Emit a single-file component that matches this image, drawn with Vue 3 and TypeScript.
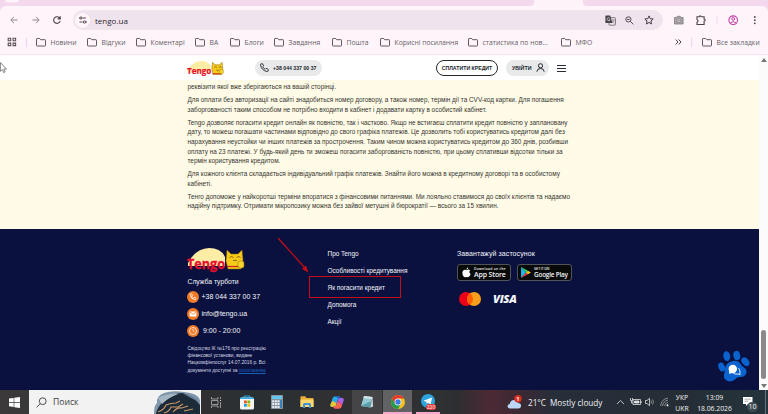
<script setup lang="ts">
interface Bookmark {
    title: string;
    width: number;
}

const bookmarks: Bookmark[] = [
    { title: 'Новини', width: 51 },
    { title: 'Відгуки', width: 49 },
    { title: 'Коментарі', width: 59 },
    { title: 'ВА', width: 35 },
    { title: 'Блоги', width: 44 },
    { title: 'Завдання', width: 58 },
    { title: 'Пошта', width: 48 },
    { title: 'Корисні посилання', width: 88 },
    { title: 'статистика по нов...', width: 93 },
    { title: 'МФО', width: 60 },
];

const paragraphs: string[][] = [
    ['реквізити якої вже зберігаються на вашій сторінці.'],
    [
        'Для оплати без авторизації на сайті знадобиться номер договору, а також номер, термін дії та CVV-код картки. Для погашення',
        'заборгованості таким способом не потрібно входити в кабінет і додавати картку в особистий кабінет.',
    ],
    [
        'Tengo дозволяє погасити кредит онлайн як повністю, так і частково. Якщо не встигаєш сплатити кредит повністю у заплановану',
        'дату, то можеш погашати частинами відповідно до свого графіка платежів. Це дозволить тобі користуватись кредитом далі без',
        'нарахування неустойки чи інших платежів за прострочення. Таким чином можна користуватись кредитом до 360 днів, розбивши',
        'оплату на 23 платежі. У будь-який день ти зможеш погасити заборгованість повністю, при цьому сплативши відсотки тільки за',
        'термін користування кредитом.',
    ],
    [
        'Для кожного клієнта складається індивідуальний графік платежів. Знайти його можна в кредитному договорі та в особистому',
        'кабінеті.',
    ],
    [
        'Тенго допоможе у найкоротші терміни впоратися з фінансовими питаннями. Ми лояльно ставимося до своїх клієнтів та надаємо',
        'надійну підтримку. Отримати мікропозику можна без зайвої метушні й бюрократії — всього за 15 хвилин.',
    ],
];

const footerLinks: string[] = ['Про Tengo', 'Особливості кредитування', 'Як погасити кредит', 'Допомога', 'Акції'];
</script>

<template>
    <div class="screen">
        <svg class="tabs" viewBox="0 0 768 6" width="768" height="6">
            <rect x="5" y="-4" width="14" height="6.5" rx="3" fill="#fdf3f9" />
            <path d="M530 6q4 0 4-4V0h49v2q0 4 4 4z" fill="#fdf3f9" />
        </svg>

        <div class="toolbar">
            <div class="nav">
                <svg width="8" height="8" viewBox="0 0 8 8" fill="none" stroke="#91848f"><path d="M7.5 4H1M4 .8L.8 4 4 7.2" /></svg>
                <svg width="8" height="8" viewBox="0 0 8 8" fill="none" stroke="#91848f"><path d="M.5 4H7M4 .8L7.2 4 4 7.2" /></svg>
                <svg width="8" height="8" viewBox="0 0 8 8" fill="none" stroke="#4a4048" stroke-width="1.1"><path d="M6.8 2.3A3.3 3.3 0 1 0 7.2 4.8M7.2.3v2.6H4.6" /></svg>
            </div>
            <div class="address">
                <span class="site-info">
                    <svg width="8" height="8" viewBox="0 0 8 8" fill="none" stroke="#453c43" stroke-width=".9"><path d="M0 2h1M3.5 2H7M.5 6h3M6.8 6H8" /><circle cx="2" cy="2" r="1.1" /><circle cx="5.5" cy="6" r="1.2" /></svg>
                </span>
                <span class="url">tengo.ua</span>
                <svg class="translate" width="11" height="11" viewBox="0 0 11 11">
                    <rect x="4" y="2.6" width="6.5" height="7.6" rx=".8" fill="#e9dfe8" stroke="#6b626a" stroke-width=".8" />
                    <path d="M1 .5h4.2L7.4 8H1Q.4 8 .4 7.4V1.1Q.4.5 1 .5z" fill="#4b444a" />
                    <path d="M6.3 5h3.5M8 4.3V5M9.2 5Q8.6 7.2 6.8 7.8M7 6l2.2 2" fill="none" stroke="#7b727a" stroke-width=".6" />
                    <path d="M4.8 3.3A1.5 1.5 0 1 0 5 4.7H3.8" fill="none" stroke="#fff" stroke-width=".6" />
                </svg>
                <svg class="lens" width="9" height="9" viewBox="0 0 9 9" fill="none" stroke="#554b53"><circle cx="3.4" cy="3.4" r="2.6" /><path d="M5.4 5.4l3 3M2.1 3.4h2.6" /></svg>
                <svg class="star" width="10" height="10" viewBox="0 0 10 10" fill="none" stroke="#4a4048" stroke-width="1"><path d="M5 .9l1.2 2.8 3 .3-2.3 2 .7 3L5 7.4 2.4 9l.7-3L.8 4l3-.3z" /></svg>
            </div>
            <svg class="tools" width="102" height="12" viewBox="0 0 102 12" fill="none">
                <path d="M11.5 3.5h2l.8-1.2h3l.8 1.2h2V10h-8.600z" fill="#aaa2a8" stroke="#827b80" stroke-width=".8" />
                <circle cx="15.8" cy="6.6" r="1.9" fill="#eee" stroke="#827b80" stroke-width=".8" />
                <path d="M15.8 5.5v2.2M14.7 6.6h2.2" stroke="#827b80" stroke-width=".6" />
                <path d="M34 2.8h2.3q.9-2 1.8 0h3v2.5q2.5.9 0 1.9v3.3H34V8.2q2-1.3 0-2.6z" stroke="#4a4048" stroke-width="1.1" />
                <path d="M54 2v8" stroke="#f8d0ef" />
                <circle cx="70.2" cy="6.2" r="4.3" stroke="#c43fa4" stroke-width="1.1" />
                <circle cx="70.2" cy="4.9" r="1.4" stroke="#c43fa4" />
                <path d="M67.1 9q3-2.8 6.2 0" stroke="#c43fa4" />
                <g fill="#4a4048"><circle cx="91.8" cy="3" r=".9" /><circle cx="91.8" cy="6.2" r=".9" /><circle cx="91.8" cy="9.3" r=".9" /></g>
            </svg>
        </div>

        <div class="bookmarks">
            <div class="apps">
                <svg width="10" height="10" viewBox="0 0 10 10" fill="none" stroke="#5b5159" stroke-width="1.1"><path d="M1.2 1.2h2.5v2.5H1.2zM6.1 1.2h2.5v2.5H6.1zM1.2 6.1h2.5v2.5H1.2zM6.1 6.1h2.5v2.5H6.1z" /></svg>
                <i class="divider"></i>
            </div>
            <div v-for="item in bookmarks" :key="item.title" class="bookmark" :style="{ width: item.width + 'px' }">
                <svg width="10" height="9" viewBox="0 0 10 9" fill="none" stroke="#625860"><path d="M.5 1.1Q.5.5 1.1.5h2.6l1 1.2h4.2q.6 0 .6.6v5.1q0 .6-.6.6H1.1Q.5 8 .5 7.4z" /></svg>
                <span>{{ item.title }}</span>
            </div>
            <div class="more">
                <svg width="7" height="6" viewBox="0 0 7 6" fill="none" stroke="#4a4048"><path d="M.7.5L3 3 .7 5.5M3.7.5L6 3 3.7 5.5" /></svg>
            </div>
            <i class="divider"></i>
            <div class="bookmark all">
                <svg width="10" height="9" viewBox="0 0 10 9" fill="none" stroke="#625860"><path d="M.5 1.1Q.5.5 1.1.5h2.6l1 1.2h4.2q.6 0 .6.6v5.1q0 .6-.6.6H1.1Q.5 8 .5 7.4z" /></svg>
                <span>Все закладки</span>
            </div>
        </div>

        <div class="viewport">
            <div class="page">
                <header class="header">
                    <svg class="logo" width="37" height="16" viewBox="0 0 58 25">
                        <path d="M1 15Q8 1 22 0q12 0 16 9v9H1z" fill="#ffeda6" />
                        <path d="M40 2l4 4h7l4-4 1 10-2 9H41l-2-8z" fill="#f6ca19" stroke="#8a6510" stroke-width=".8" />
                        <path d="M43 10l2-1 2 1M50 10l2-1 2 1M46 14q2 2 4 0" fill="none" stroke="#5b3b10" />
                        <path d="M40 20h14" stroke="#c72520" stroke-width="1.5" />
                        <rect x="51" y="13" width="6" height="7" rx="2" fill="#f9d52b" stroke="#8a6510" stroke-width=".6" />
                        <text x="0" y="20.5" class="logo-text" textLength="38" lengthAdjust="spacingAndGlyphs">Tengo</text>
                    </svg>
                    <div class="phone-pill">
                        <svg width="9" height="9" viewBox="0 0 9 9" fill="none" stroke="#252a30" stroke-width=".9"><path d="M1 .8h1.7l.9 2.1-1 .9q.8 1.6 2.5 2.5l1-1 2.1 1v1.6q-.2.7-1.1.6Q1.5 7.6.5 1.8.5 1 1 .8z" /></svg>
                        <span>+38 044 337 00 37</span>
                    </div>
                    <div class="pay">СПЛАТИТИ КРЕДИТ</div>
                    <div class="login">
                        <span>УВІЙТИ</span>
                        <svg width="9" height="9" viewBox="0 0 9 9" fill="none" stroke="#252a30"><circle cx="4.5" cy="2.8" r="2.1" /><path d="M.8 8.7q.3-3.2 3.7-3.2t3.7 3.2" /></svg>
                    </div>
                    <div class="burger"><i></i><i></i><i></i></div>
                </header>

                <main class="article">
                    <p v-for="(lines, i) in paragraphs" :key="i">
                        <span v-for="line in lines" :key="line">{{ line }}</span>
                    </p>
                </main>

                <footer class="footer">
                    <div class="contacts">
                        <svg width="58" height="25" viewBox="0 0 58 25">
                            <path d="M1 15Q8 1 22 0q12 0 16 9v9H1z" fill="#ffeda6" />
                            <path d="M40 2l4 4h7l4-4 1 10-2 9H41l-2-8z" fill="#f6ca19" stroke="#8a6510" stroke-width=".5" />
                            <path d="M42.5 9.5l2-1 2 1M49.5 9.5l2-1 2 1M46 12q1 1.5 2 0 1 1.5 2 0" fill="none" stroke="#5b3b10" stroke-width=".7" />
                            <path d="M40 18.5h14" stroke="#c72520" stroke-width="1.2" />
                            <rect x="51" y="13" width="6" height="7" rx="2" fill="#f9d52b" stroke="#8a6510" stroke-width=".5" />
                            <text x="0" y="20.5" class="logo-text" textLength="38" lengthAdjust="spacingAndGlyphs">Tengo</text>
                        </svg>
                        <div class="support">Служба турботи</div>
                        <div class="contact">
                            <svg width="12" height="12" viewBox="0 0 12 12" fill="none" stroke="#fff" stroke-width=".8"><circle cx="6" cy="6" r="6" fill="#f07a25" stroke="none" /><path d="M3.5 2.8h1.3l.6 1.6-.7.7q.6 1.3 1.9 1.9l.7-.7 1.6.7v1.2q-.2.6-.8.5-4.5-.6-5-5.2 0-.5.4-.7z" /></svg>
                            <span>+38 044 337 00 37</span>
                        </div>
                        <div class="contact">
                            <svg width="12" height="12" viewBox="0 0 12 12"><circle cx="6" cy="6" r="6" fill="#f07a25" /><rect x="2.6" y="3.4" width="6.8" height="5.2" rx=".7" fill="#fff" /><path d="M3 4l3 2.4L9 4" fill="none" stroke="#f07a25" stroke-width=".8" /></svg>
                            <span>info@tengo.ua</span>
                        </div>
                        <div class="contact hours">
                            <svg width="12" height="12" viewBox="0 0 12 12" fill="none" stroke="#fff" stroke-width=".7"><circle cx="6" cy="6" r="6" fill="#f07a25" stroke="none" /><circle cx="6" cy="6" r="3.5" /><path d="M6 3.8V6l1.4.8" /></svg>
                            <span>9:00 - 20:00</span>
                        </div>
                        <div class="legal">
                            <div>Свідоцтво ІК №176 про реєстрацію</div>
                            <div>фінансової установи, видане</div>
                            <div>Нацкомфінпослуг 14.07.2016 р. Всі</div>
                            <div>документи доступні за <a>посиланням</a></div>
                        </div>
                    </div>
                    <nav class="links">
                        <a v-for="link in footerLinks" :key="link">{{ link }}</a>
                    </nav>
                    <div class="download">
                        <div class="download-title">Завантажуй застосунок</div>
                        <div class="stores">
                            <div class="store">
                                <svg width="9" height="11" viewBox="0 0 9 11" fill="#fff"><path d="M4.6 3Q6.8 1.9 8.2 3.6 6.3 5.3 8.6 7 7.7 10.3 6 10.3q-1.4-.7-2.7 0Q1 10.3.4 6.5.2 3.3 2.6 2.8q1 0 2 .2zM4.5 2.4Q4.6.8 6.2.3 6.3 2 4.5 2.4z" /></svg>
                                <div><small>Download on the</small><b>App Store</b></div>
                            </div>
                            <div class="store google">
                                <svg width="10" height="11" viewBox="0 0 9 10"><path d="M0 0v10l4.5-5z" fill="#1fb6ee" /><path d="M0 0l6.3 3.5L4.5 5z" fill="#35d16f" /><path d="M0 10l6.3-3.5L4.5 5z" fill="#f13c4b" /><path d="M6.3 3.5L9 5 6.3 6.5 4.5 5z" fill="#fbc61b" /></svg>
                                <div><small>GET IT ON</small><b>Google Play</b></div>
                            </div>
                        </div>
                        <div class="cards">
                            <svg width="22" height="14" viewBox="0 0 22 14"><circle cx="7" cy="7" r="7" fill="#eb0019" /><circle cx="15" cy="7" r="7" fill="#f79e1b" /><path d="M11 1.3a7 7 0 0 1 0 11.4 7 7 0 0 1 0-11.4z" fill="#ff5f00" /></svg>
                            <span class="visa">VISA</span>
                        </div>
                    </div>
                </footer>
            </div>
            <div class="scrollbar">
                <i class="arrow up"></i>
                <i class="thumb"></i>
                <i class="arrow down"></i>
            </div>
        </div>

        <div class="taskbar">
            <div class="start">
                <svg width="11" height="11" viewBox="0 0 11 11" fill="#fff"><path d="M0 1.5l4.7-.6V5H0zM5.3.8L11 0v5H5.3zM0 5.7h4.7v4.2L0 9.3zM5.3 5.7H11V11l-5.7-.8z" /></svg>
            </div>
            <div class="search">
                <svg width="11" height="11" viewBox="0 0 11 11" fill="none" stroke="#3c3c3c" stroke-width=".9"><circle cx="6.7" cy="4.2" r="3.4" /><path d="M4.3 6.6L.6 10.4" /></svg>
                <span>Поиск</span>
                <svg class="doodle" width="47" height="24" viewBox="0 0 47 24">
                    <path d="M0 24Q0 15 3 13 2 6 10 3q8-3 20-1 14 1 16 8v14z" fill="#8096aa" />
                    <path d="M10 11Q20 3 28 3q10 2 18 12v9H2q1-7 8-13z" fill="#1d2a37" />
                    <path d="M4 8q10-5 20-4Q14 8 8 14" fill="#a5b6c5" />
                    <path d="M30 4q9 0 15 8l-8-4z" fill="#66839b" />
                    <path d="M4 22q6-2 8-7 5-2 10-2l4-2M10 23q5-1 7-6h7l5-3M19 22q4-5 9-4l6-2M30 21l9-2" fill="none" stroke="#c79766" stroke-width="1.1" />
                </svg>
            </div>
            <div class="app taskview">
                <svg width="11" height="11" viewBox="0 0 11 11" fill="none" stroke="#b0b0b0" stroke-width=".8"><path d="M.5 0v2H7V0M.5 3.5H7v4H.5zM.5 11V9H7v2M9.5 0v2M9.5 5v6" /><path d="M9 3.5h1" stroke="#fff" /></svg>
            </div>
            <div class="app">
                <svg width="14" height="15" viewBox="0 0 14 15"><path d="M4 3V1h6v2" fill="none" stroke="#29a5e0" /><rect y="2.5" width="14" height="12" rx="1.5" fill="#f2f4f5" /><path d="M0 4V3.5Q0 2.5 1 2.5h12q1 0 1 1V4z" fill="#36afe6" /><path d="M4 5.5h2.8v2.8H4z" fill="#f25022" /><path d="M7.4 5.5h2.8v2.8H7.4z" fill="#7fba00" /><path d="M4 8.9h2.8v2.8H4z" fill="#00a4ef" /><path d="M7.4 8.9h2.8v2.8H7.4z" fill="#ffb900" /></svg>
            </div>
            <div class="app">
                <svg width="12" height="14" viewBox="0 0 12 14"><rect width="12" height="14" rx=".7" fill="#88959e" /><rect x="1" y="1" width="10" height="3" fill="#62c6ef" /><path d="M1.2 5.2h2v2h-2zm2.700 0h2v2h-2zm2.600 0h2v2h-2zM1.2 8.1h2v2h-2zm2.700 0h2v2h-2zm2.600 0h2v2h-2zM1.2 11h2v2h-2zm2.700 0h2v2h-2zm2.600 0h2v2h-2z" fill="#e8edef" /><path d="M9.2 5.2H11V13H9.2z" fill="#2d7dc0" /></svg>
            </div>
            <div class="app">
                <svg width="14" height="12" viewBox="0 0 14 12"><path d="M.5 1Q.5.3 1.2.3h4L6.5 2h6.3q.7 0 .7.7V11H.5z" fill="#e8ac31" /><path d="M.5 3.5h13V11H.5z" fill="#ffd66f" /><path d="M3 12V8.5q0-1.500 1.500-1.500h5Q11 7 11 8.500V12H9V9H5v3z" fill="#3a94db" /></svg>
            </div>
            <div class="app">
                <svg width="14" height="13" viewBox="0 0 14 13">
                    <path d="M4.5.5H9q1.3 0 1.7 2L8 3 6 9.5Q5.5 11 4 11H2Q0 11 .5 8.5L2.5 2.5Q3 .5 4.5.5z" fill="#25a9e6" />
                    <path d="M.5 8L2.5 5l4 2-1 3Q5 11 4 11H2Q0 11 .5 8z" fill="#e9c632" />
                    <path d="M9.5 12.5H5q-1.3 0-1.7-2L6 10 8 3.5Q8.5 2 10 2h2q2 0 1.5 2.5l-2 6q-.5 2-2 2z" fill="#d849a8" />
                    <path d="M3.3 10.5L6 10l1.3-4L12 9l-.5 1.5q-.5 2-2 2H5q-1.3 0-1.7-2z" fill="#f2684e" />
                    <path d="M6 .5h3q1.3 0 1.7 2L8.5 3z" fill="#2657d6" />
                    <path d="M8 3.5Q8.5 2 10 2h2q2 0 1.5 2.5L12.5 8z" fill="#9c67e8" />
                </svg>
            </div>
            <div class="app notes">
                <svg width="14" height="14" viewBox="0 0 14 14"><path d="M4 1l8.5 1-2 10.500L1 11z" fill="#93c9d3" /><path d="M4 1l8.500 1-.5 2L3.500 3z" fill="#dbe6e8" /><path d="M1 11L9 7l2.500-.5-1 6z" fill="#5a9eaa" /><path d="M12.500 2l.6 9.500-2.600 1z" fill="#d6d9da" /></svg>
            </div>
            <div class="app chrome">
                <svg width="14" height="14" viewBox="0 0 14 14"><circle cx="7" cy="7" r="7" fill="#fbc116" /><path d="M.94 3.5A7 7 0 0 1 13.06 3.5H7L4 8.7z" fill="#e33b2e" /><path d="M.94 3.5A7 7 0 0 0 7 14l3-5.2-6-.1z" fill="#229b4d" /><circle cx="7" cy="7" r="3.4" fill="#fff" /><circle cx="7" cy="7" r="2.7" fill="#3a7be8" /></svg>
            </div>
            <div class="app telegram">
                <svg width="14" height="14" viewBox="0 0 14 14"><circle cx="7" cy="7" r="7" fill="#2ba3dc" /><path d="M2.5 6.8L11 3.5 9.7 10.5 7 8.7 5.8 10 5.5 8z" fill="#fff" /><path d="M5.5 8L9.5 5 6.2 8.4 5.8 10z" fill="#b4d9eb" /></svg>
                <span class="badge">220</span>
            </div>
            <div class="weather">
                <svg width="16" height="15" viewBox="0 0 16 15"><path d="M3 13.5q-2.5-.2-2.5-2.3 0-2 2.2-2.3Q3.5 5 7 5q3 0 4 3 3 0 3 2.7t-2.7 2.8z" fill="#bcd7fa" /><circle cx="11" cy="3.7" r="3.7" fill="#d7301f" /><text x="11" y="5.7" text-anchor="middle" class="alert">1</text></svg>
                <span class="temp">21°C</span>
                <span>Mostly cloudy</span>
            </div>
            <svg class="tray" width="54" height="12" viewBox="0 0 54 12" fill="none" stroke="#e0e0e0" stroke-width=".8">
                <path d="M0 8l3.5-3.5L7 8" />
                <path d="M16 3.5h7.5v5H16zM24.2 5v2" /><path d="M17.5 5H22v2h-4.5z" fill="#e0e0e0" /><path d="M13.5 2v2.500h2V2M14.500 4.500V7H16" />
                <path d="M28.5 4.500H30l2.500-2.200v7.400L30 7.500h-1.500z" /><path d="M34 4.500q1 1.500 0 3M35.500 3.300q2 2.700 0 5.400" stroke="#9a9a9a" />
                <path d="M43.500 10q1-7 7.500-8M45.500 10q.7-5 5.500-6M47.500 10q.5-3 3.500-3.700" stroke="#a5a5a5" /><circle cx="50.5" cy="9.3" r=".7" fill="#fff" />
            </svg>
            <div class="lang"><span>УКР</span><span>UKR</span></div>
            <div class="clock"><span>13:09</span><span>18.06.2026</span></div>
            <div class="notify">
                <svg width="10" height="10" viewBox="0 0 10 10" fill="#fff"><path d="M0 0h9.5v7H5L3 9V7H0z" /><path d="M1.5 2.2H8M1.5 4.2h4" stroke="#777" stroke-width=".6" /></svg>
                <span>10</span>
            </div>
            <i class="desktop-edge"></i>
        </div>

        <div class="mark-box"></div>
        <svg class="mark-arrow" width="34" height="38" viewBox="0 0 34 38"><path d="M2 2l27 30" stroke="#c40d16" stroke-width="1.2" /><path d="M32.5 36.5L26 33l3.8-3.5z" fill="#c40d16" /></svg>
        <svg class="paw" width="32" height="32" viewBox="0 0 32 32">
            <g fill="#0b63d0">
                <ellipse cx="3.7" cy="17" rx="3.2" ry="4.6" transform="rotate(-22 3.7 17)" />
                <ellipse cx="8.7" cy="6.2" rx="3.4" ry="4.9" transform="rotate(-10 8.7 6.2)" />
                <ellipse cx="18.8" cy="5.5" rx="3.4" ry="4.7" transform="rotate(-12 18.8 5.5)" />
                <ellipse cx="27.4" cy="11.7" rx="3.3" ry="4.8" transform="rotate(-40 27.4 11.7)" />
                <path d="M15 11q5-1 7.5 3 1.5 2.5 3.5 3.5 3.5 2 2.2 6-1.7 4-6.7 3.5-2.5 0-4 2-3 3-7 2.300-5.500-1.600-4.500-7 1-2.500 1-5.300.5-6.500 8-8z" />
            </g>
            <circle cx="14.8" cy="19" r="4.2" fill="#fff" />
            <path d="M11.5 21l-.6 2.7 3.5-.8z" fill="#fff" />
            <path d="M20.3 18q2 1.5 1.6 4l.2 2.5-2.6-.5q-2.3.5-4-.7" fill="none" stroke="#fff" stroke-width=".9" />
        </svg>
        <svg class="cursor" width="8" height="12" viewBox="0 0 8 12"><path d="M.4.5v8.8l2-1.7 1.3 3 1.4-.6-1.3-2.9h2.7z" fill="#fff" stroke="#555" stroke-width=".7" /></svg>
    </div>
</template>

<style>
body {
    margin: 0;
    overflow: hidden;
}
</style>

<style scoped>
.screen {
    position: relative;
    width: 768px;
    height: 414px;
    display: flex;
    flex-direction: column;
    overflow: hidden;
    font-family: "Liberation Sans", Arial, sans-serif;
    white-space: nowrap;
    background: #f4d8ee;
}

svg {
    display: block;
    flex: none;
}

i {
    display: block;
}

.toolbar {
    display: flex;
    align-items: center;
    height: 28px;
    box-sizing: border-box;
    border-radius: 6px 6px 0 0;
    background: #fef5fa;
}

.nav {
    display: flex;
    gap: 13.5px;
    width: 63px;
    padding-left: 10px;
}

.address {
    display: flex;
    align-items: center;
    width: 590px;
    height: 20px;
    margin-left: -.5px;
    border-radius: 10px;
    background: #efe3ee;
    color: #2e282d;
    font-family: "Open Sans", sans-serif;
    font-size: 8px;
}

.site-info {
    display: grid;
    place-items: center;
    width: 15px;
    height: 15px;
    margin: 0 5px 0 2.5px;
    border-radius: 50%;
    background: #fdf5fa;
}

.translate {
    margin-left: auto;
}

.lens {
    margin-left: 9px;
}

.star {
    margin: 0 9px 0 10px;
}

.bookmarks {
    display: flex;
    align-items: center;
    height: 21px;
    padding: 0 0 4px 7px;
    box-sizing: border-box;
    border-bottom: 1px solid #f6e3ee;
    background: #fef5fa;
    color: #685e66;
    font-family: "Open Sans", sans-serif;
    font-size: 6.8px;
}

.apps {
    display: flex;
    align-items: center;
    gap: 8.5px;
    width: 29px;
}

.divider {
    width: 1px;
    height: 9px;
    background: #f8d0ef;
}

.bookmark {
    display: flex;
    flex: none;
    align-items: center;
    gap: 4.5px;
}

.more {
    width: 16px;
    margin-left: 54px;
}

.all {
    margin-left: 10px;
}

.viewport {
    display: flex;
    height: 335px;
}

.page {
    width: 759px;
    background: #fffbe7;
}

.header {
    display: flex;
    align-items: center;
    height: 25px;
    padding-left: 187px;
    box-sizing: border-box;
    background: #fff;
    color: #20252a;
    font-weight: bold;
}

.logo {
    margin-top: 2px;
}

.logo-text {
    fill: #e60d2e;
    stroke: #e60d2e;
    stroke-width: .3px;
    font: bold 14px "Open Sans", sans-serif;
}

.phone-pill {
    display: flex;
    align-items: center;
    gap: 4px;
    width: 67px;
    height: 16px;
    margin-left: 31px;
    padding-left: 5px;
    box-sizing: border-box;
    border-radius: 8px;
    background: #e8e9eb;
    font-size: 5.2px;
}

.pay {
    display: grid;
    place-items: center;
    width: 62px;
    height: 16px;
    margin-left: 114px;
    box-sizing: border-box;
    border: 1px solid #24282d;
    border-radius: 8px;
    font-size: 5.2px;
}

.login {
    display: flex;
    align-items: center;
    gap: 5px;
    width: 43px;
    height: 16px;
    margin-left: 8px;
    padding-left: 6px;
    box-sizing: border-box;
    border-radius: 8px;
    background: #e8e9eb;
    font-size: 5.3px;
}

.burger {
    display: grid;
    gap: 2px;
    margin: 1px 0 0 8px;
}

.burger i {
    width: 9px;
    height: 1px;
    background: #292d33;
}

.article {
    height: 149px;
    padding: 2.2px 0 0 187.5px;
    box-sizing: border-box;
    color: #35352f;
    font-size: 6.4px;
    line-height: 9.6px;
}

.article p {
    margin: 0 0 3.4px;
}

.article span {
    display: block;
}

.footer {
    display: flex;
    height: 161px;
    padding-left: 187.5px;
    box-sizing: border-box;
    background: #0a113f;
    color: #f5f6fa;
    font-size: 7px;
}

.contacts {
    width: 140px;
    padding-top: 19px;
}

.support {
    margin: 3.5px 0 4px;
    line-height: 10px;
    font-size: 6.8px;
}

.contact {
    display: flex;
    align-items: center;
    gap: 2.5px;
    height: 12px;
    margin-bottom: 5px;
}

.contacts svg {
    margin-left: -.5px;
}

.contact.hours {
    gap: 4px;
}

.legal {
    margin-top: 8.5px;
    font-size: 4.8px;
    line-height: 7.2px;
    color: #d5d8e3;
}

.legal a {
    color: #1762b8;
    text-decoration: underline;
}

.links {
    display: flex;
    flex-direction: column;
    width: 129.5px;
    padding-top: 17.1px;
    font-size: 6.45px;
    line-height: 16.9px;
}

.download {
    padding-top: 19.5px;
}

.download-title {
    line-height: 10px;
    letter-spacing: .08px;
}

.stores {
    display: flex;
    gap: 6px;
    margin-top: 5.5px;
}

.store {
    display: flex;
    align-items: center;
    gap: 3px;
    width: 54px;
    height: 17px;
    padding-left: 4px;
    box-sizing: border-box;
    border: 1px solid #50535a;
    border-radius: 3px;
    background: #080909;
    font-family: "Open Sans", sans-serif;
}

.google {
    width: 55px;
    padding-left: 3px;
}

.store small,
.store b {
    display: block;
    font-weight: 600;
}

.store small {
    font-size: 3.4px;
    line-height: 4px;
    letter-spacing: .25px;
}

.store b {
    font-size: 7px;
    line-height: 8px;
    letter-spacing: -.15px;
}

.google small {
    letter-spacing: -.1px;
}

.google b {
    font-size: 6.4px;
    letter-spacing: -.2px;
}

.cards {
    display: flex;
    align-items: center;
    gap: 12px;
    margin: 11px 0 0 2px;
}

.visa {
    font: italic 800 11.3px/14px "Open Sans", sans-serif;
    letter-spacing: -.3px;
}

.scrollbar {
    display: flex;
    flex-direction: column;
    align-items: center;
    width: 9px;
    height: 335px;
    background: #fbfbfb;
}

.arrow {
    border: 3px solid transparent;
}

.up {
    margin-top: 3px;
    border-top-width: 0;
    border-bottom: 4px solid #777;
}

.thumb {
    width: 5px;
    height: 49px;
    margin-top: 268px;
    border-radius: 3px;
    background: #8a8a8a;
}

.down {
    margin-top: 5px;
    border-top: 4px solid #777;
    border-bottom-width: 0;
}

.taskbar {
    display: flex;
    align-items: center;
    height: 24px;
    color: #f2f2f2;
    font-family: "Open Sans", sans-serif;
    background: linear-gradient(90deg, #3b3939 0, #303032 200px, #293032 255px, #303033 330px, #303133 440px, #2c2e31 455px, #4c2935 490px, #3a2933 520px, #262e3a 555px, #252d35 680px, #24343c);
}

.start {
    display: grid;
    place-items: center;
    width: 29px;
}

.search {
    display: flex;
    align-items: center;
    gap: 6px;
    width: 172px;
    height: 24px;
    padding-left: 7px;
    box-sizing: border-box;
    background: #f2f2f2;
    color: #3d3d3d;
    font-size: 8.6px;
}

.doodle {
    margin-left: auto;
}

.app {
    position: relative;
    display: grid;
    place-items: center;
    width: 30px;
    height: 24px;
    box-sizing: border-box;
}

.taskview {
    width: 31px;
}

.notes {
    background: #454548;
}

.chrome {
    width: 29px;
    margin-left: 1px;
    padding-top: 1px;
    border-bottom: 2px solid #f3a9c9;
    background: #626164;
}

.telegram {
    width: 24px;
    margin-left: 4px;
    padding-right: 1px;
    border-bottom: 2px solid #f3a9c9;
}

.badge {
    position: absolute;
    right: 4px;
    top: 14px;
    width: 10px;
    border-radius: 3px;
    background: #e13c38;
    font-size: 5px;
    line-height: 6px;
    text-align: center;
}

.weather {
    display: flex;
    align-items: center;
    width: 109px;
    margin-left: 67px;
    font-size: 8.2px;
}

.alert {
    fill: #fff;
    font: bold 5px "Open Sans", sans-serif;
}

.temp {
    width: 22px;
    margin-left: 5px;
}

.tray {
    margin-left: 1px;
}

.lang,
.clock {
    display: flex;
    flex-direction: column;
    align-items: center;
    font-size: 6.8px;
    line-height: 11px;
}

.lang {
    width: 14px;
    margin: 1px 0 0 4px;
}

.clock {
    width: 38px;
    margin: 1px 0 0 6.5px;
}

.notify {
    position: relative;
    width: 18px;
    height: 18px;
    margin-left: 9.5px;
}

.notify svg {
    margin-top: 4px;
}

.notify span {
    position: absolute;
    left: 4px;
    top: 9px;
    width: 11px;
    border-radius: 5px;
    background: #3f4a50;
    font-size: 7px;
    line-height: 10px;
    text-align: center;
}

.desktop-edge {
    width: 1px;
    height: 24px;
    margin-left: 4px;
    background: #68737a;
}

.mark-box {
    position: absolute;
    left: 309px;
    top: 276px;
    width: 92px;
    height: 22px;
    box-sizing: border-box;
    border: 1px solid #c40d16;
}

.mark-arrow {
    position: absolute;
    left: 276px;
    top: 236px;
}

.paw {
    position: absolute;
    left: 718px;
    top: 350px;
}

.cursor {
    position: absolute;
    left: 0;
    top: 62px;
}
</style>
